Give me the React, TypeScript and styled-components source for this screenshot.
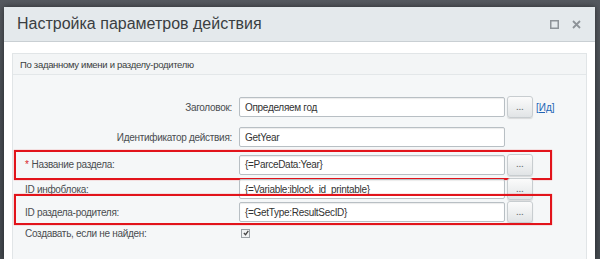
import styled, { createGlobalStyle } from 'styled-components'

const GlobalStyle = createGlobalStyle`
  html, body {
    margin: 0;
    padding: 0;
    background: #4a4f55;
    font-family: Arial, "Liberation Sans", sans-serif;
    overflow: hidden;
  }
`

const Screen = styled.div`
  height: 259px;
  padding: 7px 5px 0 4px;
  box-sizing: border-box;
  background: linear-gradient(180deg, #55595f 0%, #4a4f55 40%, #464b51 100%);
`

const Dialog = styled.div`
  width: 591px;
  height: 252px;
  background: #fff;
  box-shadow: 0 0 6px rgba(0, 0, 0, 0.5);
  display: flex;
  flex-direction: column;
  overflow: hidden;
`

const Header = styled.div`
  height: 34px;
  flex: none;
  display: flex;
  align-items: center;
  padding: 0 14px 0 13px;
  background: #e4e9ec;
  border-bottom: 1px solid #c9cfd3;
`

const Title = styled.h1`
  flex: 1;
  margin: 0;
  font-size: 16px;
  font-weight: normal;
  color: #3a3e41;
`

const HeaderIcons = styled.div`
  display: flex;
  gap: 13px;
  align-items: center;
  color: #8d9398;
`

const Body = styled.div`
  flex: 1;
  padding: 11px 8px 0 8px;
`

const Panel = styled.div`
  height: 100%;
  background: #f5f7f8;
  border: 1px solid #e1e5e7;
  border-bottom: none;
  box-sizing: border-box;
`

const SectionHead = styled.div`
  height: 20px;
  display: flex;
  align-items: center;
  padding-left: 7px;
  font-size: 9.5px;
  letter-spacing: -0.3px;
  color: #3a3d40;
  background: #f3f5f6;
  border-bottom: 1px solid #e3e7e9;
`

const Rows = styled.div`
  padding-top: 17px;
  display: flex;
  flex-direction: column;
`

const Row = styled.div<{ $h: number; $mark?: [number, number] }>`
  position: relative;
  height: ${(p) => p.$h}px;
  display: grid;
  grid-template-columns: 219px 1fr;
  column-gap: 7px;
  align-items: center;

  ${(p) =>
    p.$mark &&
    `
    &::after {
      content: '';
      position: absolute;
      left: 1px;
      right: 34px;
      top: ${p.$mark[0]}px;
      bottom: ${p.$mark[1]}px;
      border: 2px solid #e2141b;
      box-shadow: 0 0 1px rgba(226, 20, 27, 0.6);
      pointer-events: none;
    }
  `}
`

const Label = styled.div<{ $left?: boolean }>`
  font-size: 10px;
  letter-spacing: -0.3px;
  color: #4a4d50;
  text-align: ${(p) => (p.$left ? 'left' : 'right')};
  padding-left: ${(p) => (p.$left ? '12px' : '0')};
  white-space: nowrap;
`

const Req = styled.span`
  color: #d9242b;
  margin-right: 3px;
`

const Field = styled.div`
  display: flex;
  align-items: center;
  gap: 2px;
`

const Input = styled.div`
  width: 266px;
  height: 20px;
  box-sizing: border-box;
  border: 1px solid #b8bfc4;
  border-radius: 2px;
  background: #fff;
  box-shadow: inset 0 1px 1px rgba(0, 0, 0, 0.08);
  padding-left: 5px;
  display: flex;
  align-items: center;
  font-size: 10px;
  letter-spacing: -0.3px;
  color: #333;
  white-space: nowrap;
  overflow: hidden;
`

const DotsButton = styled.div`
  width: 26px;
  height: 22px;
  box-sizing: border-box;
  border: 1px solid #c8cdd0;
  border-radius: 3px;
  background: linear-gradient(180deg, #fbfbfb 0%, #eceeef 60%, #e1e4e6 100%);
  box-shadow: 0 1px 1px rgba(0, 0, 0, 0.12);
  display: flex;
  align-items: center;
  justify-content: center;
  font-size: 8px;
  font-weight: bold;
  color: #70757a;
  letter-spacing: 0.3px;
`

const Link = styled.a`
  font-size: 10px;
  color: #2266b5;
  text-decoration: underline;
  margin-left: 1px;
`

const Check = styled.div`
  width: 7px;
  height: 7px;
  margin-left: 2px;
  border: 1px solid #9aa0a5;
  background: #f0f2f3;
  display: flex;
  align-items: center;
  justify-content: center;
`

function MaximizeIcon() {
  return (
    <svg width="9" height="9" viewBox="0 0 9 9">
      <rect x="0.75" y="0.75" width="7.5" height="7.5" fill="none" stroke="currentColor" strokeWidth="1.5" />
    </svg>
  )
}

function CloseIcon() {
  return (
    <svg width="9" height="9" viewBox="0 0 9 9">
      <path d="M1 1 L8 8 M8 1 L1 8" stroke="currentColor" strokeWidth="1.8" />
    </svg>
  )
}

function CheckMark() {
  return (
    <svg width="6" height="6" viewBox="0 0 7 7">
      <path d="M1 3.5 L3 5.5 L6.2 1" fill="none" stroke="#444" strokeWidth="1.5" />
    </svg>
  )
}

export default function App() {
  return (
    <>
      <GlobalStyle />
      <Screen>
        <Dialog>
          <Header>
            <Title>Настройка параметров действия</Title>
            <HeaderIcons>
              <MaximizeIcon />
              <CloseIcon />
            </HeaderIcons>
          </Header>
          <Body>
            <Panel>
              <SectionHead>По заданному имени и разделу-родителю</SectionHead>
              <Rows>
                <Row $h={30}>
                  <Label>Заголовок:</Label>
                  <Field>
                    <Input>Определяем год</Input>
                    <DotsButton>...</DotsButton>
                    <Link>[Ид]</Link>
                  </Field>
                </Row>
                <Row $h={30}>
                  <Label>Идентификатор действия:</Label>
                  <Field>
                    <Input>GetYear</Input>
                  </Field>
                </Row>
                <Row $h={25} $mark={[-2, -3]}>
                  <Label $left>
                    <Req>*</Req>Название раздела:
                  </Label>
                  <Field>
                    <Input>{'{=ParceData:Year}'}</Input>
                    <DotsButton>...</DotsButton>
                  </Field>
                </Row>
                <Row $h={24}>
                  <Label $left>ID инфоблока:</Label>
                  <Field>
                    <Input>{'{=Variable:iblock_id_printable}'}</Input>
                    <DotsButton>...</DotsButton>
                  </Field>
                </Row>
                <Row $h={22} $mark={[-7, -2]}>
                  <Label $left>ID раздела-родителя:</Label>
                  <Field>
                    <Input>{'{=GetType:ResultSecID}'}</Input>
                    <DotsButton>...</DotsButton>
                  </Field>
                </Row>
                <Row $h={20}>
                  <Label $left>Создавать, если не найден:</Label>
                  <Field>
                    <Check>
                      <CheckMark />
                    </Check>
                  </Field>
                </Row>
              </Rows>
            </Panel>
          </Body>
        </Dialog>
      </Screen>
    </>
  )
}
